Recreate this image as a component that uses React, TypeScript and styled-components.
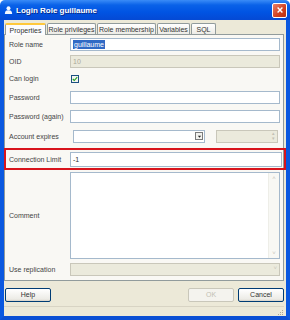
import React from 'react';
import styled, { createGlobalStyle } from 'styled-components';

const GlobalStyle = createGlobalStyle`
  html, body {
    margin: 0;
    padding: 0;
    background: #ffffff;
  }
  body {
    font-family: "Liberation Sans", Arial, sans-serif;
    font-size: 7px;
    color: #222;
  }
`;

const tabs = [
  { label: 'Properties', width: 41, active: true },
  { label: 'Role privileges', width: 49 },
  { label: 'Role membership', width: 59 },
  { label: 'Variables', width: 33 },
  { label: 'SQL', width: 25 },
];

const App: React.FC = () => {
  return (
    <>
      <GlobalStyle />
      <Window>
        <TitleBar>
          <TitleIcon viewBox="0 0 10 10">
            <circle cx="5" cy="3" r="2.2" fill="#f4f8ff" />
            <path d="M1 9.5 C1 6 2.6 5.4 5 5.4 C7.4 5.4 9 6 9 9.5 Z" fill="#f4f8ff" />
          </TitleIcon>
          <Title>Login Role guillaume</Title>
          <CloseButton>
            <svg viewBox="0 0 10 10" width="8" height="8">
              <path d="M2 2 L8 8 M8 2 L2 8" stroke="#fff" strokeWidth="1.8" />
            </svg>
          </CloseButton>
        </TitleBar>

        <Frame>
          <TabStrip>
            {tabs.map((tab) => (
              <Tab key={tab.label} $active={!!tab.active} style={{ width: tab.width }}>
                {tab.label}
              </Tab>
            ))}
          </TabStrip>

          <Panel>
            <Row $h={17}>
              <Label>Role name</Label>
              <Input>
                <Selected>guillaume</Selected>
              </Input>
            </Row>
            <Row $h={16}>
              <Label>OID</Label>
              <Input $disabled>10</Input>
            </Row>
            <Row $h={19}>
              <Label>Can login</Label>
              <CheckBox>
                <svg viewBox="0 0 8 8" width="6" height="6">
                  <path d="M1 4 L3 6 L7 1.5" stroke="#21a121" strokeWidth="1.5" fill="none" />
                </svg>
              </CheckBox>
            </Row>
            <Row $h={18}>
              <Label>Password</Label>
              <Input />
            </Row>
            <Row $h={20}>
              <Label>Password (again)</Label>
              <Input />
            </Row>
            <Row $h={20}>
              <Label>Account expires</Label>
              <DateField>
                <DropButton>
                  <svg viewBox="0 0 6 6" width="5" height="5">
                    <path d="M1 2 L5 2 L3 4.5 Z" fill="#222" />
                  </svg>
                </DropButton>
              </DateField>
              <SpinField>
                <SpinArrows>
                  <span>▴</span>
                  <span>▾</span>
                </SpinArrows>
              </SpinField>
            </Row>
            <Highlight>
              <Label>Connection Limit</Label>
              <Input>-1</Input>
            </Highlight>
            <CommentRow>
              <Label>Comment</Label>
              <TextArea>
                <ScrollBar>
                  <span>˄</span>
                  <span>˅</span>
                </ScrollBar>
              </TextArea>
            </CommentRow>
            <Row $h={21}>
              <Label>Use replication</Label>
              <Input $disabled>
                <SelectArrow>˅</SelectArrow>
              </Input>
            </Row>
          </Panel>

          <ButtonBar>
            <Button>Help</Button>
            <Spacer />
            <Button $disabled>OK</Button>
            <Button>Cancel</Button>
          </ButtonBar>

          <StatusBar>
            <Grip viewBox="0 0 8 8">
              <rect x="6" y="2" width="1" height="1" fill="#aaa79a" />
              <rect x="4" y="4" width="1" height="1" fill="#aaa79a" />
              <rect x="6" y="4" width="1" height="1" fill="#aaa79a" />
              <rect x="2" y="6" width="1" height="1" fill="#aaa79a" />
              <rect x="4" y="6" width="1" height="1" fill="#aaa79a" />
              <rect x="6" y="6" width="1" height="1" fill="#aaa79a" />
            </Grip>
          </StatusBar>
        </Frame>
      </Window>
    </>
  );
};

const Window = styled.div`
  width: 290px;
  height: 320px;
  display: flex;
  flex-direction: column;
  overflow: hidden;
`;

const TitleBar = styled.div`
  height: 20px;
  flex: none;
  display: flex;
  align-items: center;
  padding: 0 3px 0 4px;
  background: linear-gradient(#3a8cf7 0%, #0a62e8 25%, #0054e3 60%, #0449d4 100%);
  border-radius: 5px 5px 0 0;
`;

const TitleIcon = styled.svg`
  width: 9px;
  height: 10px;
  margin-right: 3px;
`;

const Title = styled.div`
  flex: 1;
  color: #ffffff;
  font-weight: bold;
  font-size: 8px;
  text-shadow: 1px 1px 0 #0a2d8a;
`;

const CloseButton = styled.div`
  width: 13px;
  height: 13px;
  border: 1px solid #ffffff;
  border-radius: 2px;
  background: linear-gradient(135deg, #e9806a, #d1401f 60%, #b8300f);
  display: flex;
  align-items: center;
  justify-content: center;
`;

const Frame = styled.div`
  flex: 1;
  display: flex;
  flex-direction: column;
  background: #ece9d8;
  border-left: 4px solid #0a58e0;
  border-right: 4px solid #0a58e0;
  border-bottom: 4px solid #0a4fd4;
  padding: 2px 2px 0 0;
`;

const TabStrip = styled.div`
  height: 12px;
  display: flex;
  align-items: flex-end;
  padding-left: 1px;
  gap: 1px;
`;

const Tab = styled.div<{ $active: boolean }>`
  height: ${(p) => (p.$active ? '12px' : '11px')};
  box-sizing: border-box;
  display: flex;
  align-items: center;
  justify-content: center;
  border: 1px solid #919b9c;
  border-bottom: none;
  border-radius: 2px 2px 0 0;
  background: ${(p) => (p.$active ? '#fcfcfe' : 'linear-gradient(#ffffff, #ecebe6)')};
  ${(p) => p.$active && 'border-top: 2px solid #ffc83c; margin-bottom: -1px; position: relative;'}
  white-space: nowrap;
  color: #333;
`;

const Panel = styled.div`
  height: 247px;
  box-sizing: border-box;
  border: 1px solid #919b9c;
  background: #f9f8f4;
  padding: 1px 3px 0 4px;
  display: flex;
  flex-direction: column;
`;

const Row = styled.div<{ $h: number }>`
  height: ${(p) => p.$h}px;
  flex: none;
  display: flex;
  align-items: center;
`;

const Label = styled.div`
  width: 61px;
  flex: none;
  color: #444;
  white-space: nowrap;
`;

const Input = styled.div<{ $disabled?: boolean }>`
  flex: 1;
  height: 13px;
  box-sizing: border-box;
  border: 1px solid ${(p) => (p.$disabled ? '#c9c7ba' : '#a5b9cc')};
  background: ${(p) => (p.$disabled ? '#ebeadc' : '#ffffff')};
  color: ${(p) => (p.$disabled ? '#aca899' : '#333')};
  display: flex;
  align-items: center;
  padding-left: 2px;
  position: relative;
`;

const Selected = styled.span`
  background: #316ac5;
  color: #ffffff;
  padding: 0 1px;
  line-height: 9px;
`;

const CheckBox = styled.div`
  width: 8px;
  height: 8px;
  margin-left: 1px;
  box-sizing: border-box;
  border: 1px solid #1c5180;
  background: #f4f4f0;
  display: flex;
  align-items: center;
  justify-content: center;
`;

const DateField = styled.div`
  width: 132px;
  height: 13px;
  margin-left: 3px;
  box-sizing: border-box;
  border: 1px solid #a5b9cc;
  background: #ffffff;
  display: flex;
  justify-content: flex-end;
  align-items: center;
  padding-right: 1px;
`;

const DropButton = styled.div`
  width: 8px;
  height: 8px;
  box-sizing: border-box;
  border: 1px solid #7b7b7b;
  background: #f2f2ee;
  display: flex;
  align-items: center;
  justify-content: center;
`;

const SpinField = styled.div`
  width: 62px;
  height: 13px;
  margin-left: 11px;
  box-sizing: border-box;
  border: 1px solid #c9c7ba;
  background: #ebeadc;
  display: flex;
  justify-content: flex-end;
`;

const SpinArrows = styled.div`
  width: 8px;
  display: flex;
  flex-direction: column;
  align-items: center;
  font-size: 5px;
  line-height: 5px;
  color: #c2c0b4;
`;

const Highlight = styled.div`
  height: 22px;
  flex: none;
  margin: 2px -6px 0 -5px;
  padding: 0 2px 0 3px;
  box-sizing: border-box;
  border: 2px solid #d8141c;
  display: flex;
  align-items: center;
  & > ${Input} {
    height: 15px;
  }
`;

const CommentRow = styled.div`
  height: 87px;
  margin-top: 2px;
  flex: none;
  display: flex;
  align-items: center;
`;

const TextArea = styled.div`
  flex: 1;
  height: 87px;
  box-sizing: border-box;
  border: 1px solid #a5b9cc;
  background: #ffffff;
  display: flex;
  justify-content: flex-end;
`;

const ScrollBar = styled.div`
  width: 10px;
  background: #f8f8f4;
  border-left: 1px solid #eeeee8;
  display: flex;
  flex-direction: column;
  justify-content: space-between;
  align-items: center;
  font-size: 6px;
  color: #c6c4b8;
  padding: 2px 0;
`;

const SelectArrow = styled.span`
  position: absolute;
  right: 2px;
  top: 1px;
  font-size: 6px;
  color: #c6c4b8;
`;

const ButtonBar = styled.div`
  height: 23px;
  display: flex;
  align-items: center;
  padding: 2px 0 0 1px;
  gap: 4px;
`;

const Spacer = styled.div`
  flex: 1;
`;

const Button = styled.div<{ $disabled?: boolean }>`
  width: 46px;
  height: 14px;
  box-sizing: border-box;
  border: 1px solid ${(p) => (p.$disabled ? '#c9c7ba' : '#003c74')};
  border-radius: 2px;
  background: ${(p) => (p.$disabled ? '#f4f3ee' : 'linear-gradient(#ffffff, #ecebe6 85%, #d6d0c5)')};
  color: ${(p) => (p.$disabled ? '#c2c0b4' : '#333')};
  display: flex;
  align-items: center;
  justify-content: center;
`;

const StatusBar = styled.div`
  flex: 1;
  border-top: 1px solid #d8d4c4;
  display: flex;
  justify-content: flex-end;
  align-items: flex-end;
`;

const Grip = styled.svg`
  width: 8px;
  height: 8px;
`;

export default App;
